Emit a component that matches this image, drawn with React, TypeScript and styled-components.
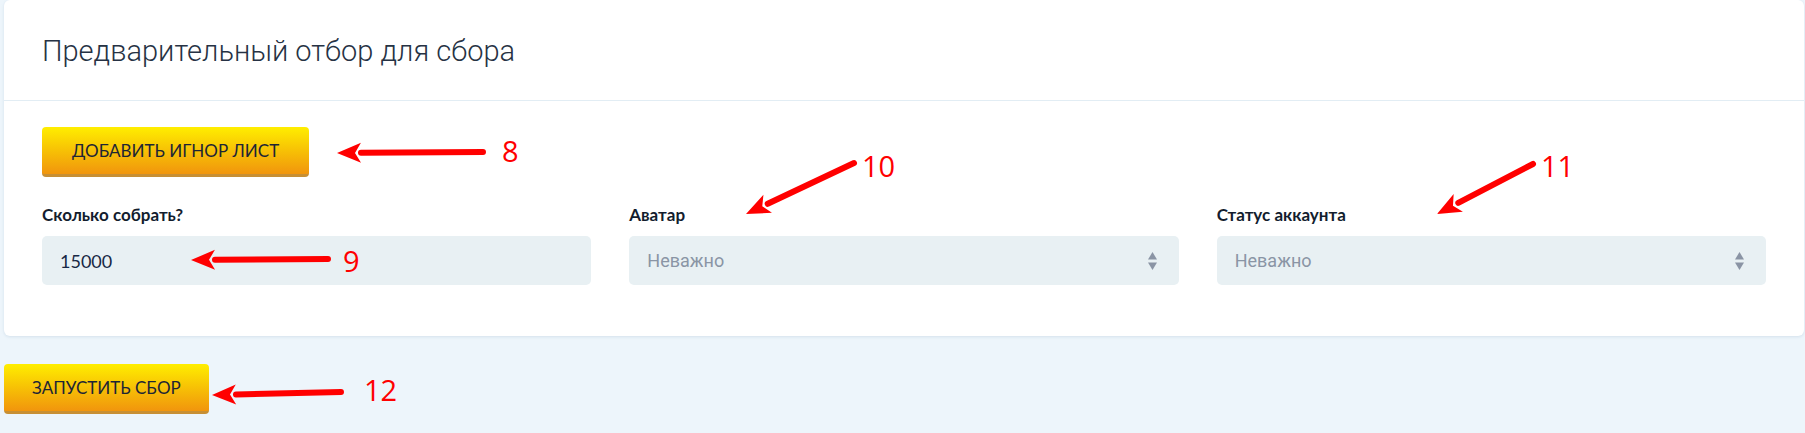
import React from 'react'
import styled, { createGlobalStyle } from 'styled-components'

const GlobalStyle = createGlobalStyle`
  html, body {
    margin: 0;
    padding: 0;
    background: #edf5fb;
  }
  body {
    font-family: Lato, "Noto Sans", sans-serif;
    color: #1c2637;
  }
`

const Page = styled.div`
  position: relative;
  width: 1805px;
  height: 433px;
  overflow: hidden;
  padding-left: 4px;
  box-sizing: border-box;
`

const Card = styled.section`
  width: 1800px;
  background: #fff;
  border-radius: 6px;
  box-shadow: 0 1px 3px rgba(140, 170, 195, 0.25);
`

const CardHeader = styled.header`
  height: 100px;
  display: flex;
  align-items: center;
  padding: 0 38px;
  border-bottom: 1px solid #e2edf4;
`

const Title = styled.h1`
  margin: 0;
  padding-top: 2px;
  font-family: Roboto, sans-serif;
  font-weight: 300;
  font-size: 29px;
  color: #263244;
`

const CardBody = styled.div`
  padding: 26px 38px 51px;
`

const GoldButton = styled.button<{ $pad?: number }>`
  height: 50px;
  padding: 0 ${p => p.$pad ?? 30}px;
  border: 0;
  border-bottom: 3px solid #c78f34;
  border-radius: 4px;
  background: linear-gradient(to bottom, #ffee00 0%, #f7c105 50%, #f1950d 100%);
  font-family: Lato, sans-serif;
  font-size: 17px;
  color: #1d2535;
  text-transform: uppercase;
  cursor: pointer;
`

const Fields = styled.div`
  display: grid;
  grid-template-columns: repeat(3, 1fr);
  column-gap: 38px;
  margin-top: 28px;
`

const Field = styled.div`
  display: flex;
  flex-direction: column;
`

const Label = styled.label`
  font-weight: 700;
  font-size: 17px;
  line-height: 20px;
  color: #131d2e;
  margin-bottom: 11px;
`

const Control = styled.div`
  position: relative;
  height: 49px;
  display: flex;
  align-items: center;
  padding: 0 18px;
  border-radius: 5px;
  background: #e8f0f3;
`

const InputValue = styled.span`
  font-size: 18px;
  color: #172845;
`

const SelectValue = styled.span`
  font-family: Roboto, sans-serif;
  font-size: 18px;
  color: #8a95a5;
`

const Arrows = styled.svg`
  margin-left: auto;
  margin-right: 4px;
`

const Footer = styled.div`
  padding-top: 28px;
`

const Annotation = styled.svg`
  position: absolute;
  inset: 0;
  pointer-events: none;
`

const Mark = styled.span<{ $x: number; $y: number }>`
  position: absolute;
  left: ${p => p.$x}px;
  top: ${p => p.$y}px;
  font-family: "Open Sans", Lato, sans-serif;
  font-size: 29px;
  line-height: 1;
  color: #ff0000;
`

const arrows = [
  { x1: 483, y1: 152, x2: 337, y2: 153 },
  { x1: 328, y1: 259, x2: 191, y2: 260 },
  { x1: 854, y1: 163, x2: 746, y2: 214 },
  { x1: 1533, y1: 164, x2: 1437, y2: 214 },
  { x1: 341, y1: 392, x2: 212, y2: 395 },
]

const Arrow = ({ x1, y1, x2, y2 }: { x1: number; y1: number; x2: number; y2: number }) => {
  const a = Math.atan2(y2 - y1, x2 - x1)
  const len = 24
  const w = 10
  const bx = x2 - Math.cos(a) * len
  const by = y2 - Math.sin(a) * len
  const nx = -Math.sin(a) * w
  const ny = Math.cos(a) * w
  return (
    <g>
      <line x1={x1} y1={y1} x2={bx} y2={by} stroke="#ff0000" strokeWidth={6} strokeLinecap="round" />
      <polygon
        points={`${x2},${y2} ${bx + nx},${by + ny} ${bx + Math.cos(a) * 6},${by + Math.sin(a) * 6} ${bx - nx},${by - ny}`}
        fill="#ff0000"
      />
    </g>
  )
}

const SelectArrows = () => (
  <Arrows width="9" height="18" viewBox="0 0 9 18">
    <path d="M4.5 0 L9 7.5 L0 7.5 Z" fill="#8a94a4" />
    <path d="M0 10.5 L9 10.5 L4.5 18 Z" fill="#8a94a4" />
  </Arrows>
)

export default function App() {
  return (
    <>
      <GlobalStyle />
      <Page>
        <Card>
          <CardHeader>
            <Title>Предварительный отбор для сбора</Title>
          </CardHeader>
          <CardBody>
            <GoldButton>Добавить игнор лист</GoldButton>
            <Fields>
              <Field>
                <Label>Сколько собрать?</Label>
                <Control>
                  <InputValue>15000</InputValue>
                </Control>
              </Field>
              <Field>
                <Label>Аватар</Label>
                <Control>
                  <SelectValue>Неважно</SelectValue>
                  <SelectArrows />
                </Control>
              </Field>
              <Field>
                <Label>Статус аккаунта</Label>
                <Control>
                  <SelectValue>Неважно</SelectValue>
                  <SelectArrows />
                </Control>
              </Field>
            </Fields>
          </CardBody>
        </Card>
        <Footer>
          <GoldButton $pad={28}>Запустить сбор</GoldButton>
        </Footer>
        <Annotation width="1805" height="433">
          {arrows.map((a, i) => (
            <Arrow key={i} {...a} />
          ))}
        </Annotation>
        <Mark $x={502} $y={136}>8</Mark>
        <Mark $x={343} $y={246}>9</Mark>
        <Mark $x={862} $y={151}>10</Mark>
        <Mark $x={1541} $y={151}>11</Mark>
        <Mark $x={364} $y={375}>12</Mark>
      </Page>
    </>
  )
}
